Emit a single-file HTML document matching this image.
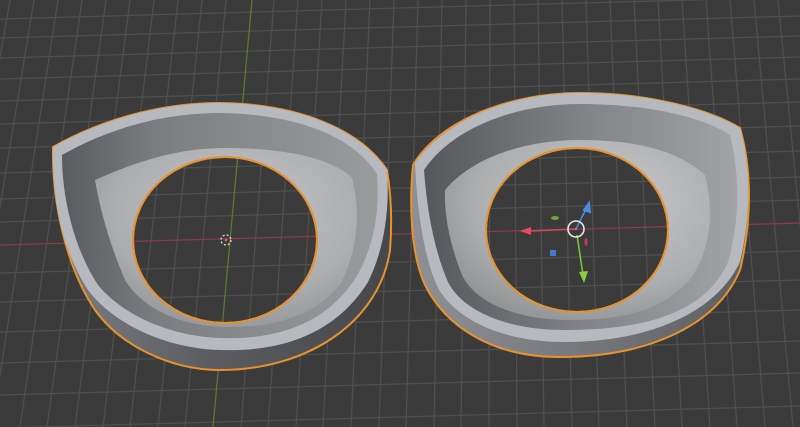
<!DOCTYPE html>
<html><head><meta charset="utf-8"><style>
html,body{margin:0;padding:0;background:#3b3b3b;width:800px;height:427px;overflow:hidden}
svg{display:block}
</style></head><body>
<svg width="800" height="427" viewBox="0 0 800 427" xmlns="http://www.w3.org/2000/svg">
<defs>
<linearGradient id="sideL" x1="0" y1="0" x2="1" y2="0">
<stop offset="0" stop-color="#7c7e82"/><stop offset="0.45" stop-color="#5c5d60"/><stop offset="1" stop-color="#46474a"/>
</linearGradient>
<linearGradient id="sideR" x1="0" y1="0" x2="1" y2="0">
<stop offset="0" stop-color="#8e9094"/><stop offset="0.5" stop-color="#76777a"/><stop offset="1" stop-color="#5e5f62"/>
</linearGradient>
<linearGradient id="wallL" x1="0" y1="0" x2="1" y2="0">
<stop offset="0" stop-color="#5a5b5f"/><stop offset="0.3" stop-color="#7c7d80"/><stop offset="1" stop-color="#9a9b9d"/>
</linearGradient>
<linearGradient id="wallR" x1="0" y1="0" x2="1" y2="0">
<stop offset="0" stop-color="#56575b"/><stop offset="0.5" stop-color="#818285"/><stop offset="1" stop-color="#a2a3a5"/>
</linearGradient>
<radialGradient id="floorL" cx="0.55" cy="0.35" r="0.7">
<stop offset="0" stop-color="#c6c7c9"/><stop offset="0.7" stop-color="#abacae"/><stop offset="1" stop-color="#939496"/>
</radialGradient>
<radialGradient id="floorR" cx="0.6" cy="0.35" r="0.7">
<stop offset="0" stop-color="#cacbcd"/><stop offset="0.7" stop-color="#acadaf"/><stop offset="1" stop-color="#929395"/>
</radialGradient>
</defs>
<rect width="800" height="427" fill="#3b3b3b"/>
<g stroke="#4f4f4f" stroke-width="1.3">
<line x1="-14" y1="0" x2="-91" y2="427"/><line x1="10" y1="0" x2="-64" y2="427"/>
<line x1="34" y1="0" x2="-36" y2="427"/><line x1="58" y1="0" x2="-8" y2="427"/>
<line x1="82" y1="0" x2="20" y2="427"/><line x1="106" y1="0" x2="47" y2="427"/>
<line x1="130" y1="0" x2="75" y2="427"/><line x1="154" y1="0" x2="103" y2="427"/>
<line x1="178" y1="0" x2="130" y2="427"/><line x1="202" y1="0" x2="158" y2="427"/>
<line x1="226" y1="0" x2="185" y2="427"/>
<line x1="274" y1="0" x2="241" y2="427"/><line x1="298" y1="0" x2="268" y2="427"/>
<line x1="322" y1="0" x2="296" y2="427"/><line x1="346" y1="0" x2="323" y2="427"/>
<line x1="370" y1="0" x2="351" y2="427"/><line x1="394" y1="0" x2="379" y2="427"/>
<line x1="418" y1="0" x2="406" y2="427"/><line x1="442" y1="0" x2="434" y2="427"/>
<line x1="466" y1="0" x2="461" y2="427"/><line x1="490" y1="0" x2="489" y2="427"/>
<line x1="514" y1="0" x2="517" y2="427"/><line x1="538" y1="0" x2="544" y2="427"/>
<line x1="562" y1="0" x2="572" y2="427"/><line x1="586" y1="0" x2="599" y2="427"/>
<line x1="610" y1="0" x2="627" y2="427"/><line x1="634" y1="0" x2="655" y2="427"/>
<line x1="658" y1="0" x2="682" y2="427"/><line x1="682" y1="0" x2="710" y2="427"/>
<line x1="706" y1="0" x2="737" y2="427"/><line x1="730" y1="0" x2="765" y2="427"/>
<line x1="754" y1="0" x2="793" y2="427"/><line x1="778" y1="0" x2="820" y2="427"/>
<line x1="802" y1="0" x2="848" y2="427"/>
<line x1="0" y1="19" x2="800" y2="-3"/><line x1="0" y1="38" x2="800" y2="16"/>
<line x1="0" y1="58" x2="800" y2="36"/><line x1="0" y1="79" x2="800" y2="57"/>
<line x1="0" y1="101" x2="800" y2="79"/><line x1="0" y1="124" x2="800" y2="102"/>
<line x1="0" y1="148" x2="800" y2="126"/><line x1="0" y1="173" x2="800" y2="151"/>
<line x1="0" y1="199" x2="800" y2="177"/><line x1="0" y1="222" x2="800" y2="200"/>
<line x1="0" y1="273" x2="800" y2="251"/><line x1="0" y1="302" x2="800" y2="280"/>
<line x1="0" y1="332" x2="800" y2="310"/><line x1="0" y1="363" x2="800" y2="341"/>
<line x1="0" y1="395" x2="800" y2="373"/><line x1="0" y1="428" x2="800" y2="406"/>
</g>
<line x1="0" y1="245" x2="800" y2="223" stroke="#8a3a48" stroke-width="1.3"/>
<line x1="252" y1="0" x2="213" y2="427" stroke="#5b7a2e" stroke-width="1.3"/>

<!-- LEFT OBJECT -->
<g fill-rule="evenodd">
<path d="M53,147 C110,115 170,103 220,103 C300,104 360,130 387,170 C392,200 392,225 390,250 C380,320 310,370 220,370 C170,370 120,345 95,310 C65,265 52,200 53,147 Z M317,240 A92,83 0 1 0 133,240 A92,83 0 1 0 317,240 Z" fill="url(#sideL)" stroke="#e8922e" stroke-width="2"/>
<path d="M53,147 C110,115 170,103 220,103 C300,104 360,130 387,170 C390,210 384,250 368,282 C335,335 280,352 220,350 C160,348 110,320 88,290 C62,250 52,200 53,147 Z M317,240 A92,83 0 1 0 133,240 A92,83 0 1 0 317,240 Z" fill="#b6babf"/>
<path d="M62,155 C115,125 170,113 220,113 C295,114 352,135 377,174 C380,210 374,245 358,274 C328,325 275,340 220,338 C165,336 120,312 98,285 C75,250 62,200 62,155 Z M317,240 A92,83 0 1 0 133,240 A92,83 0 1 0 317,240 Z" fill="url(#wallL)"/>
<path d="M95,180 C140,160 180,148 225,148 C290,148 335,160 352,178 C362,215 356,255 340,285 C312,318 270,328 225,327 C175,326 140,305 125,280 C110,245 100,210 95,180 Z M317,240 A92,83 0 1 0 133,240 A92,83 0 1 0 317,240 Z" fill="url(#floorL)"/>
<ellipse cx="225" cy="240" rx="92" ry="83" fill="none" stroke="#e8922e" stroke-width="2"/>
</g>
<circle cx="226" cy="240" r="5" fill="none" stroke="#ddd" stroke-width="1.3" stroke-dasharray="2 2"/>
<circle cx="226" cy="240" r="1.3" fill="#e07040"/>

<!-- RIGHT OBJECT -->
<g fill-rule="evenodd">
<path d="M413,165 C440,120 510,93 580,93 C650,93 710,110 740,128 C752,170 752,220 740,270 C715,330 640,357 560,357 C490,357 445,325 425,285 C411,255 409,205 413,165 Z M668,230 A91,82 0 1 0 486,230 A91,82 0 1 0 668,230 Z" fill="url(#sideR)" stroke="#e8922e" stroke-width="2"/>
<path d="M415,163 C445,120 510,93 580,93 C650,93 710,110 740,128 C752,170 750,220 740,262 C715,315 645,342 565,342 C500,342 455,318 438,288 C424,258 417,210 415,163 Z M668,230 A91,82 0 1 0 486,230 A91,82 0 1 0 668,230 Z" fill="#b6babf"/>
<path d="M424,170 C452,128 515,104 580,104 C650,104 705,118 730,135 C740,175 740,220 728,262 C705,315 640,330 565,330 C505,330 462,310 448,282 C434,250 427,210 424,170 Z M668,230 A91,82 0 1 0 486,230 A91,82 0 1 0 668,230 Z" fill="url(#wallR)"/>
<path d="M445,190 C470,160 520,140 580,140 C640,140 680,152 705,175 C715,215 710,250 690,280 C660,312 620,320 570,320 C515,320 475,302 462,275 C450,245 444,215 445,190 Z M668,230 A91,82 0 1 0 486,230 A91,82 0 1 0 668,230 Z" fill="url(#floorR)"/>
<ellipse cx="577" cy="230" rx="91" ry="82" fill="none" stroke="#e8922e" stroke-width="2"/>
</g>

<!-- gizmo -->
<line x1="576" y1="229" x2="530" y2="231" stroke="#d8485e" stroke-width="1.6"/>
<polygon points="520,231 531,227 531,235" fill="#e84a62"/>
<line x1="576" y1="229" x2="586" y2="209" stroke="#4a8ae0" stroke-width="1.6"/>
<polygon points="589,203 584,210 590,212" fill="#4a8ae0" stroke="#4a8ae0" stroke-width="2"/>
<line x1="577" y1="235" x2="583" y2="275" stroke="#7ac43a" stroke-width="1.6"/>
<polygon points="584,283 579,272 588,271" fill="#8ad03a"/>
<ellipse cx="555" cy="218" rx="4" ry="2" fill="#6aa83a"/>
<ellipse cx="586" cy="242" rx="1.6" ry="4" fill="#c0384e"/>
<rect x="550" y="250" width="6" height="6" fill="#3e7ad4"/>
<circle cx="576" cy="229" r="8" fill="none" stroke="#e8e8e8" stroke-width="1.6"/>
<circle cx="576" cy="229" r="1.2" fill="#e07040"/>
</svg>
</body></html>
